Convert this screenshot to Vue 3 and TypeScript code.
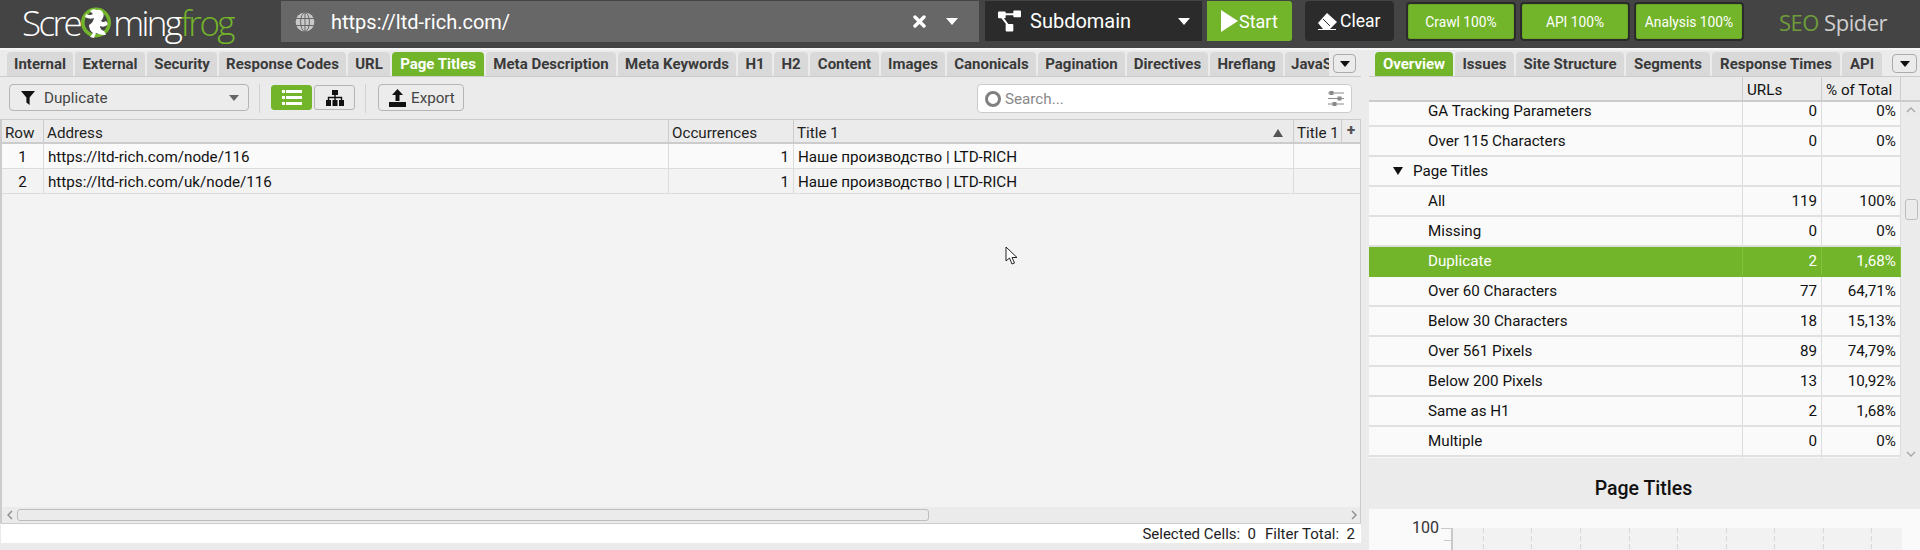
<script setup lang="ts">
interface Tab { label: string; width: number; active?: boolean }
interface Row { label: string; urls?: string; pct?: string; group?: boolean; selected?: boolean }

const leftTabs: Tab[] = [
  { label: 'Internal', width: 66 }, { label: 'External', width: 70 }, { label: 'Security', width: 70 },
  { label: 'Response Codes', width: 127 }, { label: 'URL', width: 42 }, { label: 'Page Titles', width: 92, active: true },
  { label: 'Meta Description', width: 130 }, { label: 'Meta Keywords', width: 118 }, { label: 'H1', width: 34 },
  { label: 'H2', width: 34 }, { label: 'Content', width: 69 }, { label: 'Images', width: 64 },
  { label: 'Canonicals', width: 89 }, { label: 'Pagination', width: 87 }, { label: 'Directives', width: 81 },
  { label: 'Hreflang', width: 73 }, { label: 'JavaScript', width: 90 }
]
const rightTabs: Tab[] = [
  { label: 'Overview', width: 78, active: true }, { label: 'Issues', width: 59 }, { label: 'Site Structure', width: 108 },
  { label: 'Segments', width: 84 }, { label: 'Response Times', width: 128 }, { label: 'API', width: 40 }
]
const progress = ['Crawl 100%', 'API 100%', 'Analysis 100%']
const results = [
  { row: 1, url: 'https://ltd-rich.com/node/116' },
  { row: 2, url: 'https://ltd-rich.com/uk/node/116' }
]
const rows: Row[] = [
  { label: 'GA Tracking Parameters', urls: '0', pct: '0%' },
  { label: 'Over 115 Characters', urls: '0', pct: '0%' },
  { label: 'Page Titles', group: true },
  { label: 'All', urls: '119', pct: '100%' },
  { label: 'Missing', urls: '0', pct: '0%' },
  { label: 'Duplicate', urls: '2', pct: '1,68%', selected: true },
  { label: 'Over 60 Characters', urls: '77', pct: '64,71%' },
  { label: 'Below 30 Characters', urls: '18', pct: '15,13%' },
  { label: 'Over 561 Pixels', urls: '89', pct: '74,79%' },
  { label: 'Below 200 Pixels', urls: '13', pct: '10,92%' },
  { label: 'Same as H1', urls: '2', pct: '1,68%' },
  { label: 'Multiple', urls: '0', pct: '0%' },
  { label: '' }
]
const gridLines = [30, 78.4, 127, 175.6, 224, 272.7, 321, 370, 418]
</script>

<template>
  <div class="app">
    <header class="top">
      <div class="logo">
        <span class="logo-white">Scre</span>
        <svg class="frog" width="30" height="33" viewBox="0 0 30 33">
          <circle cx="15" cy="16.5" r="13.2" fill="none" stroke="#73b52a" stroke-width="3.6" />
          <path d="M15 27 Q22 30 25 28.5 L23 25 Q19 24 19 20 Q24 22 27 18 L25 15 Q22 17 20 15 Q24 10 22 7 Q20 3 16 4 Q12 2 9 5 L12 8 Q9 10 5 8 L4 11 Q9 14 13 12 Q12 17 8 19 Q8 24 12 27 L9 31 L13 32 Z" fill="#fff" />
        </svg>
        <span class="logo-white">ming</span><span class="logo-green">frog</span>
      </div>

      <div class="url-box">
        <svg class="globe" width="20" height="20" viewBox="0 0 20 20" fill="none" stroke="#c9c9c9" stroke-width="1.6">
          <circle cx="10" cy="10" r="9.4" fill="#c9c9c9" stroke="none" />
          <ellipse cx="10" cy="10" rx="4.4" ry="9.4" stroke="#676767" stroke-width="1" />
          <path d="M1 6.5h18M1 13.5h18M10 0.5v19" stroke="#676767" stroke-width="1" />
        </svg>
        <span class="url-text">https://ltd-rich.com/</span>
        <svg class="url-x" width="13" height="13" viewBox="0 0 13 13"><path d="M2 2l9 9M11 2l-9 9" stroke="#fff" stroke-width="3.4" stroke-linecap="round" /></svg>
        <span class="caret caret-white url-caret"></span>
      </div>

      <div class="mode-box">
        <svg width="23" height="22" viewBox="0 0 24 22" fill="#fff">
          <rect x="0" y="1" width="8" height="7" rx="1" /><rect x="16" y="0" width="8" height="7" rx="1" /><rect x="8" y="14" width="8" height="8" rx="1" />
          <path d="M7 4h10M4 7l7 9" stroke="#fff" stroke-width="2" />
        </svg>
        <span class="mode-text">Subdomain</span>
        <span class="caret caret-white mode-caret"></span>
      </div>

      <button class="start" type="button">
        <svg width="17" height="22" viewBox="0 0 17 22"><path d="M0 0L17 11L0 22Z" fill="#fff" /></svg>
        <span>Start</span>
      </button>

      <button class="clear" type="button">
        <svg width="19" height="17" viewBox="0 0 19 17"><path d="M9 0L19 9L12 16H5L0 10Z" fill="#fff" /><path d="M5 6L12 13" stroke="#2b2b2b" stroke-width="1" /><path d="M0 16.5h18" stroke="#fff" /></svg>
        <span>Clear</span>
      </button>

      <div class="progress">
        <div v-for="item in progress" :key="item" class="progress-item"><span>{{ item }}</span></div>
      </div>

      <div class="brand"><span class="brand-seo">SEO</span> Spider</div>
    </header>

    <main class="body">
      <section class="left">
        <div class="tabbar left-tabbar">
          <div class="tabs left-tabs">
            <div v-for="t in leftTabs" :key="t.label" class="tab" :class="{ active: t.active }" :style="{ width: t.width + 'px' }">{{ t.label }}</div>
          </div>
          <button class="more" type="button"><span class="caret caret-black"></span></button>
        </div>

        <div class="toolbar">
          <div class="select">
            <svg width="14" height="14" viewBox="0 0 14 14"><path d="M0 0H14L8.6 6.5V14L5.4 11.5V6.5Z" fill="#111" /></svg>
            <span class="select-text">Duplicate</span>
            <span class="caret caret-grey"></span>
          </div>
          <div class="vsep"></div>
          <div class="views">
            <div class="view view-on">
              <svg width="20" height="15" viewBox="0 0 20 15" fill="#fff">
                <rect x="0" y="0" width="3" height="3" /><rect x="4" y="0" width="16" height="3" />
                <rect x="0" y="6" width="3" height="3" /><rect x="4" y="6" width="16" height="3" />
                <rect x="0" y="12" width="3" height="3" /><rect x="4" y="12" width="16" height="3" />
              </svg>
            </div>
            <div class="view">
              <svg width="18" height="16" viewBox="0 0 18 16" fill="#111">
                <rect x="6" y="0" width="6" height="5" /><rect x="0" y="10" width="5" height="6" /><rect x="6.5" y="10" width="5" height="6" /><rect x="13" y="10" width="5" height="6" />
                <path d="M9 5v5M2.5 10V7.5h13V10" fill="none" stroke="#111" stroke-width="1.4" />
              </svg>
            </div>
          </div>
          <div class="vsep"></div>
          <button class="export" type="button">
            <svg width="17" height="18" viewBox="0 0 17 18" fill="#111"><path d="M8.5 0L14 6H10.5V12H6.5V6H3Z" /><path d="M0 13H17V18H0Z" /></svg>
            <span>Export</span>
          </button>
          <div class="search">
            <span class="search-ring"></span>
            <span class="search-text">Search...</span>
            <svg width="16" height="15" viewBox="0 0 16 15" fill="none" stroke="#8a8a8a" stroke-width="1">
              <path d="M0 2h16M0 7.5h16M0 13h16" />
              <rect x="2" y="0.5" width="3" height="3" fill="#8a8a8a" /><rect x="10" y="6" width="3" height="3" fill="#8a8a8a" /><rect x="5" y="11.5" width="3" height="3" fill="#8a8a8a" />
            </svg>
          </div>
        </div>

        <div class="table">
          <div class="thead trow">
            <div class="cell c-row">Row</div>
            <div class="cell">Address</div>
            <div class="cell">Occurrences</div>
            <div class="cell c-sort">Title 1<span class="sort"></span></div>
            <div class="cell">Title 1</div>
            <div class="cell c-plus">+</div>
          </div>
          <div v-for="r in results" :key="r.row" class="tbody trow" :class="{ odd: r.row === 1 }">
            <div class="cell c-row c-center">{{ r.row }}</div>
            <div class="cell c-text">{{ r.url }}</div>
            <div class="cell c-num">1</div>
            <div class="cell c-text">Наше производство | LTD-RICH</div>
            <div class="cell c-span"></div>
          </div>
          <div class="table-empty">
            <svg class="cursor" width="13" height="19" viewBox="0 0 13 19"><path d="M1 1V15L4.5 12L7 18L9.5 17L7 11.5H12Z" fill="#fff" stroke="#222" stroke-width="1" /></svg>
          </div>
          <div class="hscroll">
            <svg width="6" height="10" viewBox="0 0 6 10" fill="none" stroke="#8c8c8c" stroke-width="1.4"><path d="M5 1L1 5L5 9" /></svg>
            <div class="hthumb"></div>
            <svg width="6" height="10" viewBox="0 0 6 10" fill="none" stroke="#8c8c8c" stroke-width="1.4"><path d="M1 1L5 5L1 9" /></svg>
          </div>
        </div>

        <div class="status">
          <span>Selected Cells:&nbsp; 0</span>
          <span>Filter Total:&nbsp; 2</span>
        </div>
      </section>

      <section class="right">
        <div class="tabbar right-tabbar">
          <div class="tabs">
            <div v-for="t in rightTabs" :key="t.label" class="tab" :class="{ active: t.active }" :style="{ width: t.width + 'px' }">{{ t.label }}</div>
          </div>
          <button class="more more-right" type="button"><span class="caret caret-black"></span></button>
        </div>

        <div class="r-head">
          <div class="r-cell r-first"></div>
          <div class="r-cell">URLs</div>
          <div class="r-cell">% of Total</div>
          <div class="r-end"></div>
        </div>

        <div class="r-list">
          <div class="r-rows">
            <div class="r-inner">
              <div v-for="(row, i) in rows" :key="i" class="r-row" :class="{ selected: row.selected }">
                <div class="r-cell r-first r-label" :class="{ 'r-group': row.group }">
                  <span v-if="row.group" class="tree-caret"></span>{{ row.label }}
                </div>
                <div class="r-cell r-num">{{ row.urls }}</div>
                <div class="r-cell r-num">{{ row.pct }}</div>
              </div>
            </div>
          </div>
          <div class="vscroll">
            <svg class="v-up" width="10" height="6" viewBox="0 0 10 6" fill="none" stroke="#a6a6a6" stroke-width="1.3"><path d="M1 5L5 1L9 5" /></svg>
            <div class="vthumb"></div>
            <svg class="v-down" width="10" height="6" viewBox="0 0 10 6" fill="none" stroke="#a6a6a6" stroke-width="1.3"><path d="M1 1L5 5L9 1" /></svg>
          </div>
        </div>

        <h2 class="chart-title">Page Titles</h2>

        <div class="chart">
          <div class="y-label">100</div>
          <div class="axis">
            <span class="tick tick-major"></span>
            <span class="tick tick-minor"></span>
          </div>
          <div class="plot">
            <span v-for="x in gridLines" :key="x" class="grid-line" :style="{ left: x + 'px' }"></span>
          </div>
        </div>
      </section>
    </main>
  </div>
</template>

<style>
html, body { margin: 0; background: #ebebeb; overflow: hidden; }
</style>

<style scoped>
.app { width: 1920px; height: 550px; overflow: hidden; background: #ebebeb; font-family: Roboto, "Liberation Sans", sans-serif; font-size: 15.2px; color: #111; }
button { font-family: inherit; border: 0; padding: 0; }

.top { height: 48px; box-sizing: border-box; background: #444; display: flex; align-items: flex-start; padding-top: 1px; box-shadow: 0 2px 0 #f6f6f6; }
.logo { width: 281px; padding-left: 22px; box-sizing: border-box; height: 42px; display: flex; align-items: center; font-family: "Open Sans", sans-serif; font-weight: 300; font-size: 35px; letter-spacing: -2.6px; flex: none; line-height: 1; }
.logo-white { color: #fff; }
.logo-green { color: #73b52a; }
.frog { flex: none; margin: 0 2px 0 1px; }

.url-box { width: 698px; height: 41px; background: #676767; display: flex; align-items: center; color: #fff; flex: none; }
.globe { margin-left: 14px; flex: none; }
.url-text { margin-left: 16px; font-size: 20px; flex: 1; }
.url-x { flex: none; margin-right: 20px; }
.url-caret { margin-right: 21px; }

.caret { display: inline-block; width: 0; height: 0; border-left: 6px solid transparent; border-right: 6px solid transparent; border-top: 7px solid #fff; flex: none; }
.caret-black { border-top-color: #111; }
.caret-grey { border-top-color: #666; border-left-width: 5px; border-right-width: 5px; border-top-width: 6px; }

.mode-box { margin-left: 6px; width: 217px; height: 40px; background: #2b2b2b; color: #fff; display: flex; align-items: center; padding-left: 13px; box-sizing: border-box; flex: none; font-size: 20px; }
.mode-text { margin-left: 9px; flex: 1; }
.mode-caret { margin-right: 12px; }

.start { margin-left: 5px; width: 85px; height: 40px; background: #73b52a; color: #fff; display: flex; align-items: center; padding-left: 14px; box-sizing: border-box; border-radius: 0 3px 3px 0; font-size: 18px; gap: 1px; flex: none; }
.clear { margin-left: 13px; width: 89px; height: 40px; background: #2b2b2b; color: #fff; display: flex; align-items: center; padding-left: 13px; box-sizing: border-box; border-radius: 4px; font-size: 17.5px; gap: 3px; flex: none; }

.progress { margin-left: 12px; display: flex; gap: 4px; flex: none; margin-top: 1px; }
.progress-item { width: 110px; height: 39px; box-sizing: border-box; background: #73b52a; border: 2px solid #2b2b2b; border-radius: 4px; color: #fff; font-size: 13.8px; display: flex; align-items: center; justify-content: center; box-shadow: inset 0 0 0 1px #6aa726; }

.brand { margin-left: 35px; font-size: 22px; color: #cfcfcf; font-family: "Open Sans", sans-serif; font-weight: 400; letter-spacing: -0.5px; line-height: 42px; flex: none; }
.brand-seo { color: #6f9c3a; }

.body { display: flex; height: 502px; }
.left { width: 1369px; flex: none; }
.right { flex: 1; min-width: 0; }

.tabbar { box-sizing: border-box; padding-top: 4px; display: flex; align-items: flex-start; border-bottom: 1px solid #ccc; }
.left-tabbar { padding-left: 7px; width: 1361px; height: 29px; }
.right-tabbar { padding-left: 6px; height: 29px; }
.tabs { display: flex; gap: 2px; overflow: hidden; flex: none; }
.left-tabs { width: 1322px; }
.tab { height: 24px; flex: none; background: #d9d9d9; border-radius: 4px 4px 0 0; color: #3a3a3a; font-weight: 700; font-size: 15px; display: flex; align-items: center; justify-content: center; white-space: nowrap; box-sizing: border-box; overflow: hidden; }
.left-tabs .tab:last-child { justify-content: flex-start; padding-left: 6px; }
.tab.active { background: #73b52a; color: #fff; }
.more { margin-left: 4px; margin-top: 2px; width: 23px; height: 19px; background: #ebebeb; border: 1px solid #aaa; border-radius: 4px; display: flex; align-items: center; justify-content: center; box-sizing: border-box; flex: none; }
.more .caret { border-left-width: 5px; border-right-width: 5px; border-top-width: 6px; }
.more-right { margin-left: 10px; width: 25px; }

.toolbar { height: 42px; width: 1361px; box-sizing: border-box; padding-left: 9px; padding-top: 7px; display: flex; align-items: flex-start; }
.select { width: 240px; height: 27px; box-sizing: border-box; border: 1px solid #b5b5b5; border-radius: 4px; background: #ececec; display: flex; align-items: center; padding: 0 9px 0 11px; flex: none; }
.select-text { flex: 1; margin-left: 9px; color: #444; }
.vsep { width: 1px; height: 29px; background: #d2d2d2; flex: none; margin: 0 11px 0 10px; }
.views { display: flex; gap: 2px; flex: none; padding-top: 1px; }
.view { width: 41px; height: 25px; box-sizing: border-box; border: 1px solid #b5b5b5; border-radius: 3px; display: flex; align-items: center; justify-content: center; }
.view-on { background: #73b52a; border-color: #73b52a; }
.export { width: 86px; height: 27px; box-sizing: border-box; border: 1px solid #b5b5b5; border-radius: 4px; background: #ececec; display: flex; align-items: center; padding-left: 10px; gap: 5px; font-size: 15.2px; color: #444; flex: none; margin-left: 1px; }
.search { margin-left: 513px; width: 375px; height: 29px; box-sizing: border-box; border: 1px solid #ccc; border-radius: 4px; background: #fff; display: flex; align-items: center; padding: 0 7px; flex: none; color: #888; }
.search-ring { width: 16px; height: 16px; box-sizing: border-box; border: 3px solid #808080; border-radius: 50%; flex: none; }
.search-text { flex: 1; margin-left: 4px; }

.table { height: 404px; width: 1361px; box-sizing: border-box; border-top: 1px solid #ccc; border-left: 2px solid #ccc; border-right: 1px solid #ccc; display: flex; flex-direction: column; background: #f3f3f3; }
.trow { display: grid; grid-template-columns: 42px 625px 125px 500px 48px 18px; flex: none; }
.thead { height: 24px; background: #ebebeb; border-bottom: 2px solid #ccc; box-sizing: border-box; }
.tbody { height: 25px; box-sizing: border-box; border-bottom: 1px solid #dcdcdc; background: #f3f3f3; }
.tbody.odd { background: #fafafa; }
.cell { box-sizing: border-box; padding: 2px 3px 0; border-right: 1px solid #dcdcdc; display: flex; align-items: center; white-space: nowrap; overflow: hidden; min-width: 0; }
.thead .cell { color: #222; border-right-color: #ccc; padding-top: 3px; }
.c-text { padding-left: 4px; }
.c-center { justify-content: center; }
.c-num { justify-content: flex-end; padding-right: 4px; }
.c-sort { justify-content: space-between; padding-right: 10px; }
.sort { width: 0; height: 0; border-left: 5px solid transparent; border-right: 5px solid transparent; border-bottom: 8px solid #555; }
.thead .c-plus { border: 0; justify-content: center; color: #555; font-weight: 900; padding: 0 0 3px; }
.c-span { grid-column: span 2; border: 0; }
.table-empty { flex: 1; position: relative; }
.cursor { position: absolute; left: 1003px; top: 52px; }
.hscroll { height: 16px; flex: none; background: #ebebeb; display: flex; align-items: center; box-sizing: border-box; padding: 0 3px 1px 5px; }
.hthumb { width: 912px; height: 12px; box-sizing: border-box; border: 1px solid #bdbdbd; border-radius: 3px; margin: 0 auto 0 4px; }
.status { height: 20px; width: 1360px; margin-left: 1px; box-sizing: border-box; border-top: 1px solid #ccc; background: #fff; display: flex; justify-content: flex-end; align-items: center; gap: 9px; padding-right: 6px; color: #222; font-size: 15px; }

.r-head { display: flex; background: #ebebeb; border-bottom: 2px solid #ccc; height: 23px; }
.r-cell { width: 79px; flex: none; box-sizing: border-box; padding: 0 4px; border-right: 1px solid #dcdcdc; display: flex; align-items: center; white-space: nowrap; }
.r-head .r-cell { border-right-color: #ccc; padding-top: 2px; }
.r-first { width: 374px; }
.r-end { flex: 1; }
.r-list { height: 356px; display: flex; }
.r-rows { width: 532px; flex: none; overflow: hidden; }
.r-inner { margin-top: -5px; }
.r-row { height: 30px; box-sizing: border-box; display: flex; background: #fafafa; border-bottom: 2px solid #e0e0e0; }
.r-label { padding-left: 59px; }
.r-group { padding-left: 24px; }
.tree-caret { width: 0; height: 0; border-left: 5px solid transparent; border-right: 5px solid transparent; border-top: 8px solid #111; margin-right: 10px; }
.r-num { justify-content: flex-end; }
.r-row.selected { background: #73b52a; color: #fff; border-bottom-color: #73b52a; }
.r-row.selected .r-cell { border-right-color: #83c03d; }
.vscroll { flex: 1; background: #ebebeb; position: relative; }
.v-up { position: absolute; left: 5px; top: 5px; }
.v-down { position: absolute; left: 5px; top: 349px; }
.vthumb { position: absolute; left: 4px; top: 97px; width: 13px; height: 21px; box-sizing: border-box; border: 1px solid #bdbdbd; border-radius: 3px; }

.chart-title { margin: 0; height: 51px; display: flex; align-items: center; justify-content: center; font-size: 19.5px; font-weight: 500; color: #111; box-sizing: border-box; padding: 9px 2px 0 0; }
.chart { height: 100px; background: #fafafa; display: flex; align-items: flex-start; padding-top: 19px; box-sizing: border-box; }
.y-label { width: 70px; font-size: 16px; text-align: right; color: #333; line-height: 1; margin-top: -8px; flex: none; }
.axis { width: 10px; height: 80px; margin-left: 2px; border-right: 2px solid #c9c9c9; position: relative; flex: none; }
.tick { position: absolute; right: 0; height: 1px; background: #c9c9c9; }
.tick-major { top: 0; width: 10px; }
.tick-minor { top: 12px; width: 7px; }
.plot { position: relative; width: 449px; height: 80px; background: #f2f2f2; flex: none; overflow: hidden; }
.grid-line { position: absolute; top: 0; width: 1px; height: 80px; background: repeating-linear-gradient(to bottom, #d8d8d8 0 5px, transparent 5px 8px); }
</style>
